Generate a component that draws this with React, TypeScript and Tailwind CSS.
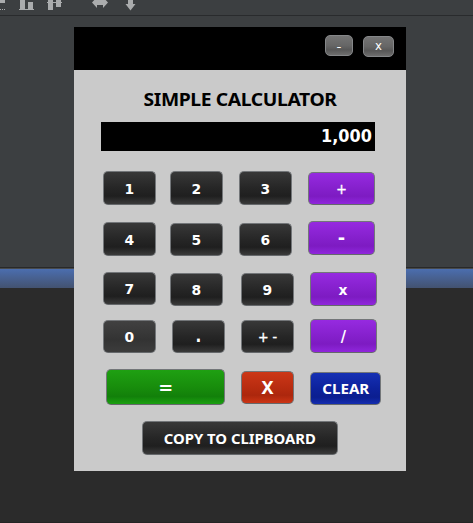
import React from 'react';

const dark = 'bg-[linear-gradient(#383838_0%,#262626_50%,#1f1f1f_75%,#3a3a3a_100%)]';
const flat = 'bg-[linear-gradient(#414141_0%,#333333_60%,#3c3c3c_100%)]';
const purple = 'bg-[linear-gradient(#962ae0_0%,#8520cc_50%,#7d1bc2_75%,#9026dc_100%)]';
const green = 'bg-[linear-gradient(#1fa012_0%,#188d0c_50%,#12800a_78%,#1ba010_100%)]';
const red = 'bg-[linear-gradient(#cc3717_0%,#b82c10_50%,#ac270d_75%,#cc3515_100%)]';
const blue = 'bg-[linear-gradient(#1530b4_0%,#0d229c_50%,#0b1e90_78%,#142db0_100%)]';
const grey = 'bg-[linear-gradient(#747474_0%,#666666_50%,#575757_72%,#6e6e6e_100%)]';

const digit = "font-['DejaVu_Sans_Condensed','DejaVu_Sans',sans-serif] font-bold text-[14px] pt-px scale-x-110";
const thin = "font-['DejaVu_Sans_Condensed','DejaVu_Sans',sans-serif] font-normal text-[14px] [-webkit-text-stroke:0.4px_white]";

type KeyProps = { label: string; box: string; fill: string; text?: string };

function Key({ label, box, fill, text = digit }: KeyProps) {
  return (
    <button
      className={`flex shrink-0 items-center justify-center rounded-[5px] border border-[#737679] border-b-[#65686b] leading-none font-bold whitespace-pre text-white ${box} ${fill}`}
    >
      <span className={text}>{label}</span>
    </button>
  );
}

function Toolbar() {
  return (
    <div className="h-4 border-b border-[#292b2d]">
      <svg className="block" width="160" height="15" viewBox="0 0 160 15" fill="#aaacad">
        <path d="M0 0h5v3H0zM0 9h1v1H0zM2 9h1v1H2zM4 9h1v1H4zM20 0h5v9h-5zM28 2h5v7h-5zM19 9h15v1H19zM48 0h5v10h-5zM56 0h5v7h-5zM47 2h15v1H47z" />
        <path d="M92 2.500L97-3v3h6v-3l5 5.500L103 8V5h-6v3zM128-2h5v6h2.500l-5 6.500-5-6.500h2.500z" />
      </svg>
    </div>
  );
}

function Calculator() {
  return (
    <main className="absolute top-[27px] left-[74px] flex h-[444px] w-[332px] flex-col bg-[#cacaca]">
      <header className="flex h-[43px] items-start justify-end gap-[10px] bg-black pt-2 pr-3 font-['DejaVu_Sans_Condensed','DejaVu_Sans',sans-serif]">
        <button className={`flex h-[21px] w-7 items-center justify-center rounded-[5px] border border-[#858789] text-[12px] leading-none text-white ${grey}`}>
          <span className="scale-x-125 pt-0.5">-</span>
        </button>
        <button className={`mt-px flex h-[21px] w-[31px] items-center justify-center rounded-[5px] border border-[#858789] text-[13px] leading-none text-white ${grey}`}>
          <span className="-mt-0.5">x</span>
        </button>
      </header>
      <h1 className="mt-[17px] h-[35px] text-center text-[18px] leading-[25px] font-bold text-black">
        <span className="inline-block scale-x-[1.072] tracking-[-0.35px]">SIMPLE CALCULATOR</span>
      </h1>
      <output className="ml-[27px] flex h-[29px] w-[274px] items-center justify-end bg-black pt-px pr-[3px] font-['DejaVu_Sans_Condensed','DejaVu_Sans',sans-serif] text-[17.5px] leading-none font-bold text-white">
        <span className="origin-right scale-x-[1.02]">1,000</span>
      </output>
      <div className="mt-5 ml-[29px] flex h-[50px] items-start">
        <Key label="1" box="h-[34px] w-[53px]" fill={dark} />
        <Key label="2" box="ml-[14px] h-[34px] w-[53px]" fill={dark} />
        <Key label="3" box="ml-4 h-[34px] w-[53px]" fill={dark} />
        <Key label="+" box="mt-px ml-4 h-[33px] w-[67px]" fill={purple} text={thin} />
      </div>
      <div className="flex h-[51px] items-start pl-[29px]">
        <Key label="4" box="mt-px h-[34px] w-[53px]" fill={dark} />
        <Key label="5" box="mt-0.5 ml-[14px] h-[33px] w-[53px]" fill={dark} />
        <Key label="6" box="mt-0.5 ml-4 h-[33px] w-[53px]" fill={dark} />
        <Key label="-" box="ml-4 h-[34px] w-[67px]" fill={purple} text="font-['DejaVu_Sans_Condensed','DejaVu_Sans',sans-serif] font-bold text-[18px] scale-x-110" />
      </div>
      <div className="flex h-[47px] items-start pl-[29px]">
        <Key label="7" box="h-[33px] w-[53px]" fill={dark} />
        <Key label="8" box="mt-px ml-[14px] h-[33px] w-[53px]" fill={dark} />
        <Key label="9" box="mt-px ml-[18px] h-[33px] w-[53px]" fill={dark} />
        <Key label="x" box="ml-4 h-[34px] w-[67px]" fill={purple} />
      </div>
      <div className="flex h-[50px] items-start pl-[29px]">
        <Key label="0" box="mt-px h-[33px] w-[53px]" fill={flat} />
        <Key label="." box="mt-px ml-4 h-[33px] w-[53px]" fill={dark} text="font-['DejaVu_Sans_Condensed','DejaVu_Sans',sans-serif] font-bold text-[17px]" />
        <Key label="+ -" box="mt-px ml-4 h-[33px] w-[53px]" fill={dark} text={thin} />
        <Key label="/" box="ml-4 h-[34px] w-[67px]" fill={purple} text="font-['DejaVu_Sans_Condensed','DejaVu_Sans',sans-serif] font-bold text-[16px] pt-0.5" />
      </div>
      <div className="flex h-[52px] items-start pl-8">
        <Key label="=" box="h-9 w-[119px]" fill={green} text="font-['DejaVu_Sans_Condensed','DejaVu_Sans',sans-serif] font-bold text-[18px] pt-0.5 scale-x-110" />
        <Key label="X" box="mt-0.5 ml-4 h-[33px] w-[53px]" fill={red} text="text-[18px] pb-px" />
        <Key label="CLEAR" box="mt-[3px] ml-4 h-[33px] w-[71px]" fill={blue} text="text-[14px] scale-x-[1.08]" />
      </div>
      <Key label="COPY TO CLIPBOARD" box="ml-[68px] h-[34px] w-[196px]" fill={dark} text="text-[14px] pt-px scale-x-[1.06]" />
    </main>
  );
}

export default function App() {
  return (
    <div className="relative flex h-[523px] w-[473px] flex-col overflow-hidden bg-[#3c3f41] font-['Noto_Sans',sans-serif]">
      <Toolbar />
      <div className="h-[251px]" />
      <div className="h-px bg-[#292929]" />
      <div className="h-px bg-[#474a4c]" />
      <div className="h-[19px] bg-linear-to-b from-[#4b6eaf] to-[#435270]" />
      <div className="flex-1 border-b border-[#242424] bg-[#2b2b2b]" />
      <Calculator />
    </div>
  );
}
